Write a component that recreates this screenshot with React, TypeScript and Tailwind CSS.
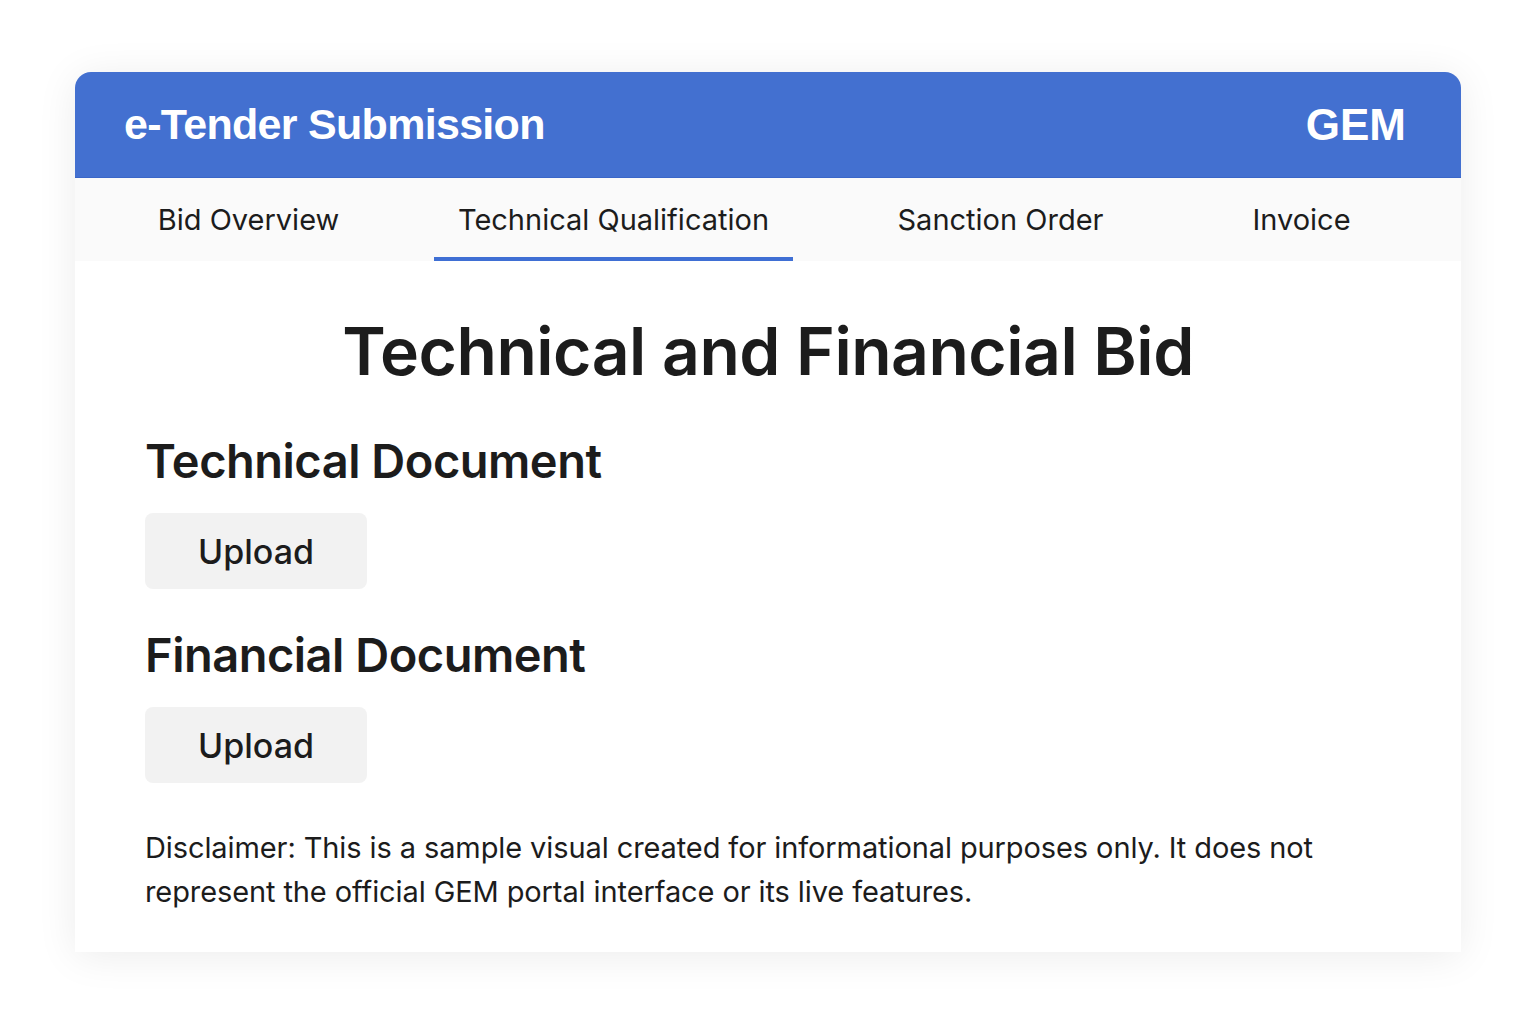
import React from 'react';

const tabs = [
  { label: 'Bid Overview', cls: 'ml-[60px] w-[227px]' },
  { label: 'Technical Qualification', cls: 'ml-[72px] w-[359px]', active: true },
  { label: 'Sanction Order', cls: 'ml-[81px] w-[253px]' },
  { label: 'Invoice', cls: 'ml-[102px] w-[145px]' },
];

function UploadSection({ title }: { title: string }) {
  return (
    <div>
      <h2 className="text-[47px] font-semibold leading-[56px] text-[#1c1c1c] tracking-[-0.5px]">{title}</h2>
      <button className="mt-[24px] w-[222px] h-[76px] rounded-lg bg-[#f2f2f2] text-[34px] font-medium text-[#1c1c1c]">
        Upload
      </button>
    </div>
  );
}

export default function App() {
  return (
    <div className="min-h-screen bg-white pt-[72px] px-[75px]" style={{ fontFamily: 'Inter, "Noto Sans", sans-serif' }}>
      <div className="w-[1386px] h-[880px] rounded-t-2xl bg-white shadow-[0_4px_40px_rgba(0,0,0,0.08)] overflow-hidden">
        <header className="h-[106px] bg-[#4370d0] flex items-center justify-between px-[49px] border-b border-[#3a66c8]">
          <h1 className="text-[43px] font-bold text-white tracking-[-0.7px]" style={{ fontFamily: '"Liberation Sans", Arial, sans-serif' }}>
            e-Tender Submission
          </h1>
          <span className="text-[44px] font-bold text-white mr-[6px]" style={{ fontFamily: '"Liberation Sans", Arial, sans-serif' }}>
            GEM
          </span>
        </header>
        <nav className="h-[83px] bg-[#fafafa] flex items-stretch">
          {tabs.map((t) => (
            <div
              key={t.label}
              className={`${t.cls} flex items-center justify-center text-[29px] text-[#1c1c1c] border-b-4 ${t.active ? 'border-[#3f6fd4]' : 'border-transparent'}`}
            >
              <span className="mt-1">{t.label}</span>
            </div>
          ))}
        </nav>
        <main className="px-[70px] pt-[50px]">
          <h1 className="text-center text-[66px] font-semibold text-[#1c1c1c] leading-[80px] tracking-[-0.5px]">
            Technical and Financial Bid
          </h1>
          <div className="mt-[42px] flex flex-col gap-[38px]">
            <UploadSection title="Technical Document" />
            <UploadSection title="Financial Document" />
          </div>
          <p className="mt-[43px] max-w-[1200px] text-[29px] leading-[44px] text-[#1c1c1c] tracking-[-0.1px]">
            Disclaimer: This is a sample visual created for informational purposes only. It does not represent the official GEM portal interface or its live features.
          </p>
        </main>
      </div>
    </div>
  );
}
